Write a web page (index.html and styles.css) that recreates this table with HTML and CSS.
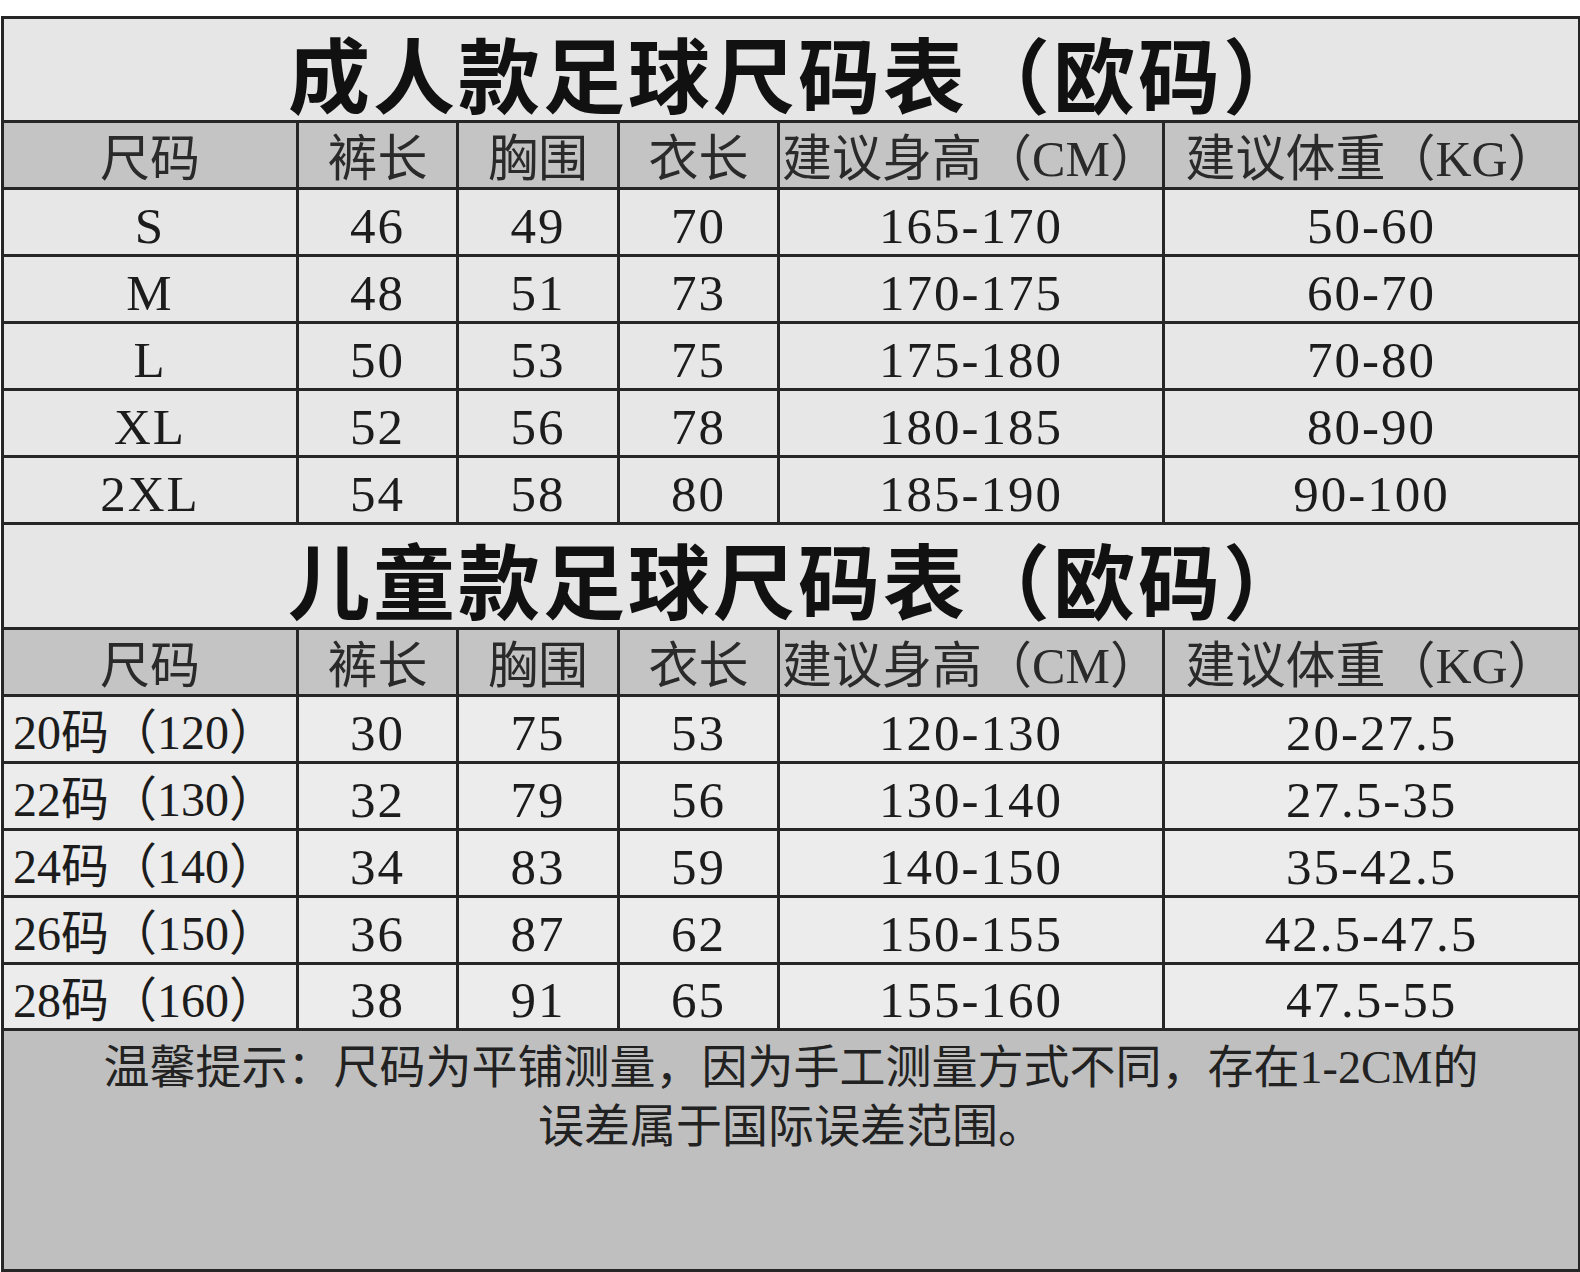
FILE: index.html
```html
<!DOCTYPE html>
<html lang="zh-CN">
<head>
<meta charset="utf-8">
<title>足球尺码表</title>
<link rel="stylesheet" href="styles.css">
</head>
<body>
<table class="chart">
  <colgroup>
    <col class="c-size">
    <col class="c-pants">
    <col class="c-chest">
    <col class="c-len">
    <col class="c-height">
    <col class="c-weight">
  </colgroup>
  <tbody>
    <tr class="title-row"><td colspan="6">成人款足球尺码表（欧码）</td></tr>
    <tr class="head-row">
      <td>尺码</td><td>裤长</td><td>胸围</td><td>衣长</td><td>建议身高（CM）</td><td>建议体重（KG）</td>
    </tr>
    <tr class="data-row adult"><td>S</td><td>46</td><td>49</td><td>70</td><td>165-170</td><td>50-60</td></tr>
    <tr class="data-row adult"><td>M</td><td>48</td><td>51</td><td>73</td><td>170-175</td><td>60-70</td></tr>
    <tr class="data-row adult"><td>L</td><td>50</td><td>53</td><td>75</td><td>175-180</td><td>70-80</td></tr>
    <tr class="data-row adult"><td>XL</td><td>52</td><td>56</td><td>78</td><td>180-185</td><td>80-90</td></tr>
    <tr class="data-row adult"><td>2XL</td><td>54</td><td>58</td><td>80</td><td>185-190</td><td>90-100</td></tr>

    <tr class="title-row kids-title"><td colspan="6">儿童款足球尺码表（欧码）</td></tr>
    <tr class="head-row">
      <td>尺码</td><td>裤长</td><td>胸围</td><td>衣长</td><td>建议身高（CM）</td><td>建议体重（KG）</td>
    </tr>
    <tr class="data-row kids"><td class="left">20码（120）</td><td>30</td><td>75</td><td>53</td><td>120-130</td><td>20-27.5</td></tr>
    <tr class="data-row kids"><td class="left">22码（130）</td><td>32</td><td>79</td><td>56</td><td>130-140</td><td>27.5-35</td></tr>
    <tr class="data-row kids"><td class="left">24码（140）</td><td>34</td><td>83</td><td>59</td><td>140-150</td><td>35-42.5</td></tr>
    <tr class="data-row kids"><td class="left">26码（150）</td><td>36</td><td>87</td><td>62</td><td>150-155</td><td>42.5-47.5</td></tr>
    <tr class="data-row kids last"><td class="left">28码（160）</td><td>38</td><td>91</td><td>65</td><td>155-160</td><td>47.5-55</td></tr>

    <tr class="note-row">
      <td colspan="6">温馨提示：尺码为平铺测量，因为手工测量方式不同，存在1-2CM的<br>误差属于国际误差范围。</td>
    </tr>
  </tbody>
</table>
</body>
</html>
```

FILE: styles.css
```css
html, body {
  margin: 0;
  padding: 0;
  background: #ffffff;
}

body {
  padding: 16px 0 0 1px;
  font-family: "Liberation Serif", "Noto Sans CJK SC", serif;
  color: #1c1c1c;
  text-spacing-trim: space-all;
}

.chart {
  width: 1577px;
  table-layout: fixed;
  border-collapse: collapse;
  border: 3px solid #262626;
}

.c-size { width: 295px; }
.c-pants { width: 160px; }
.c-chest { width: 161px; }
.c-len { width: 160px; }
.c-height { width: 385px; }
.c-weight { width: 416px; }

.chart td {
  border: 3px solid #262626;
  padding: 0;
  text-align: center;
  white-space: nowrap;
}

.title-row td {
  height: 104px;
  background: #e6e6e6;
  font-size: 82px;
  font-weight: 700;
  letter-spacing: 3px;
  line-height: 90px;
  padding-top: 4px;
  padding-left: 14px;
  box-sizing: border-box;
  color: #111111;
  font-family: "Noto Sans CJK SC", serif;
  text-spacing-trim: space-all;
}

.kids-title td {
  height: 105px;
}

.head-row td {
  height: 67px;
  background: #c4c4c4;
  font-size: 50px;
  line-height: 1;
  padding-top: 8px;
  box-sizing: border-box;
  color: #2a2a2a;
}

.data-row td {
  height: 67px;
  font-size: 51px;
  line-height: 1;
  padding-top: 8px;
  box-sizing: border-box;
  letter-spacing: 2px;
}

.adult td {
  background: #e7e7e7;
}

.kids td {
  background: #ececec;
}

.kids.last td {
  height: 66px;
}

.data-row td.left {
  text-align: left;
  padding-left: 9px;
  font-size: 48px;
  letter-spacing: 0;
}

.note-row td {
  height: 241px;
  background: #bfbfbf;
  vertical-align: top;
  font-size: 46px;
  line-height: 59px;
  padding-top: 7px;
  box-sizing: border-box;
  color: #222222;
  white-space: normal;
}
```
